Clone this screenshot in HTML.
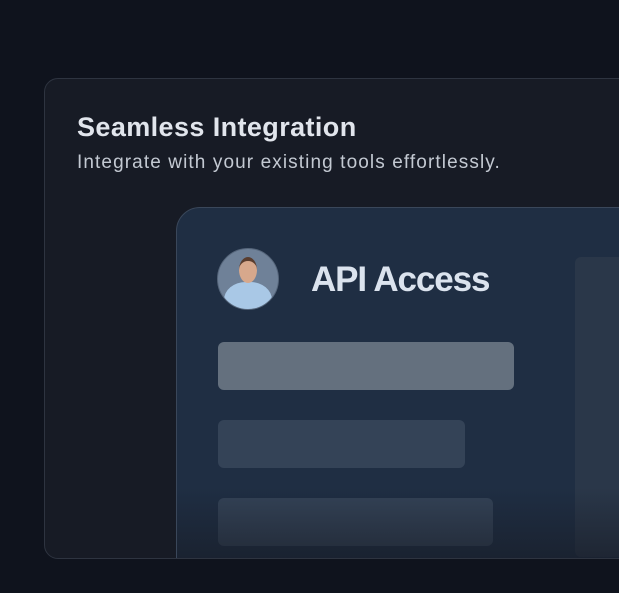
<!DOCTYPE html>
<html><head><style>
body{margin:0;width:619px;height:593px;background:#0f131d;overflow:hidden;font-family:"Liberation Sans",sans-serif;position:relative}
.card{position:absolute;left:44px;top:78px;width:640px;height:479px;border:1px solid #2e3440;border-radius:14px;background:#171b25;overflow:hidden}
.h{position:absolute;left:32px;top:33px;color:#e1e5ec;font-size:27px;font-weight:bold;letter-spacing:0.4px}
.s{position:absolute;left:32px;top:73px;color:#c3c9d2;font-size:19px;letter-spacing:1.1px}
.panel{position:absolute;left:131px;top:128px;width:520px;height:400px;border:1.5px solid #3a475a;border-radius:24px;background:#1f2e43;overflow:hidden}
.t{position:absolute;left:134px;top:52px;color:#dbe3ee;font-size:35px;font-weight:bold;letter-spacing:-1.1px}
.av{position:absolute;left:40px;top:40px;width:60px;height:60px;border-radius:50%;border:1.5px solid #55657a;background:#6f8198;overflow:hidden}
.av .hd{position:absolute;left:21px;top:8px;width:18px;height:22px;border-radius:50%;background:#d7a88c;border-top:4px solid #5a3d2e}
.av .bd{position:absolute;left:6px;top:33px;width:48px;height:40px;border-radius:45% 45% 0 0;background:#a9c8e6}
.b{position:absolute;left:41px;border-radius:6px}
.r{position:absolute;left:398px;top:49px;width:200px;height:300px;background:#2a3749;border-radius:6px}
.fade{position:absolute;left:0;right:0;bottom:0;height:120px;background:linear-gradient(rgba(23,27,37,0),#171b25 95%)}
</style></head><body>
<div class="card">
<div class="h">Seamless Integration</div>
<div class="s">Integrate with your existing tools effortlessly.</div>
<div class="panel">
<div class="av"><div class="bd"></div><div class="hd"></div></div>
<div class="t">API Access</div>
<div class="r"></div>
<div class="b" style="top:134px;width:296px;height:48px;background:#64707e"></div>
<div class="b" style="top:212px;width:247px;height:48px;background:#344357"></div>
<div class="b" style="top:290px;width:275px;height:48px;background:#344357"></div>
<div class="fade"></div>
</div>
</div>
</body></html>
